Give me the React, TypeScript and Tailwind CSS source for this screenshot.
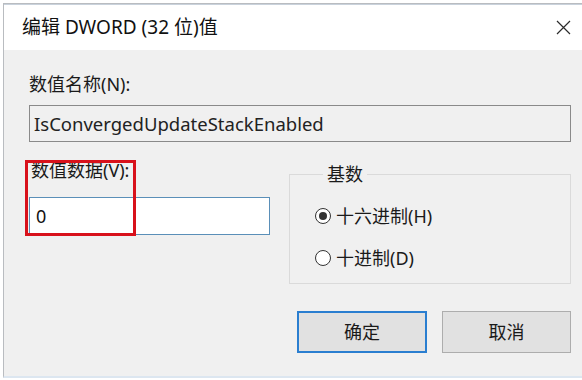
const FONT = '"Segoe UI", "Noto Sans", "Noto Sans CJK SC", sans-serif';

function Radio({ checked, label }: { checked?: boolean; label: string }) {
  return (
    <label className="flex items-center gap-[5px] text-[18px] leading-[22px] text-[#1a1a1a]">
      <span className="flex h-[16px] w-[16px] items-center justify-center rounded-full border border-[#333] bg-white">
        {checked && <span className="h-[8px] w-[8px] rounded-full bg-[#333]" />}
      </span>
      {label}
    </label>
  );
}

export default function App() {
  return (
    <div className="h-[380px] w-[582px] overflow-hidden bg-white pl-[3px] pt-[3px]" style={{ fontFamily: FONT }}>
      <div className="flex h-[375px] flex-col border-l border-t border-[#b9bcc0] border-b-2 border-b-[#dce6f0]">
        {/* title bar */}
        <div className="flex h-[46px] items-center justify-between border-t border-[#c9d2dc] bg-white pl-[18px] pr-[10px]">
          <span className="text-[19px] text-[#111]">编辑 DWORD (32 位)值</span>
          <svg width="15" height="15" viewBox="0 0 15 15" className="mr-[1px]">
            <path d="M1 1L14 14M14 1L1 14" stroke="#2b2b2b" strokeWidth="1.2" />
          </svg>
        </div>

        {/* body */}
        <div className="flex flex-1 flex-col bg-[#f0f0f0] pl-[25px] pr-[11px] pt-[23px]">
          <div className="h-[22px] text-[18px] leading-[22px] text-[#1a1a1a]">数值名称(N):</div>
          <div className="mt-[10px] flex h-[37px] items-center border border-[#8a8a8a] bg-[#f0f0f0] px-[4px] text-[18.5px] text-[#222]">
            IsConvergedUpdateStackEnabled
          </div>

          <div className="mt-[17px] flex gap-[19px]">
            <div className="relative flex w-[242px] flex-col">
              <div className="h-[22px] pl-[2px] text-[18px] leading-[22px] text-[#1a1a1a]">数值数据(V):</div>
              <div className="mt-[16px] flex h-[38px] items-center border border-[#5a8fb8] bg-white px-[6px] text-[18px] text-[#111]">
                0
              </div>
              <div className="absolute left-[-4px] top-[1px] h-[76px] w-[111px] border-[3px] border-[#d8111b]" />
            </div>

            <fieldset className="mt-[5px] h-[120px] w-[283px] border border-[#dadada] pl-[25px]">
              <legend className="ml-[8px] px-[4px] text-[18px] leading-[20px] text-[#1a1a1a]">基数</legend>
              <div className="mt-[21px] flex flex-col gap-[20px]">
                <Radio checked label="十六进制(H)" />
                <Radio label="十进制(D)" />
              </div>
            </fieldset>
          </div>

          <div className="mt-[27px] flex justify-end gap-[15px]">
            <button className="h-[42px] w-[130px] border-2 border-[#2a7ed0] bg-[#e1e1e1] text-[18px] text-[#1a1a1a]">
              确定
            </button>
            <button className="h-[42px] w-[129px] border border-[#adadad] bg-[#e1e1e1] text-[18px] text-[#1a1a1a]">
              取消
            </button>
          </div>
        </div>
      </div>
    </div>
  );
}
